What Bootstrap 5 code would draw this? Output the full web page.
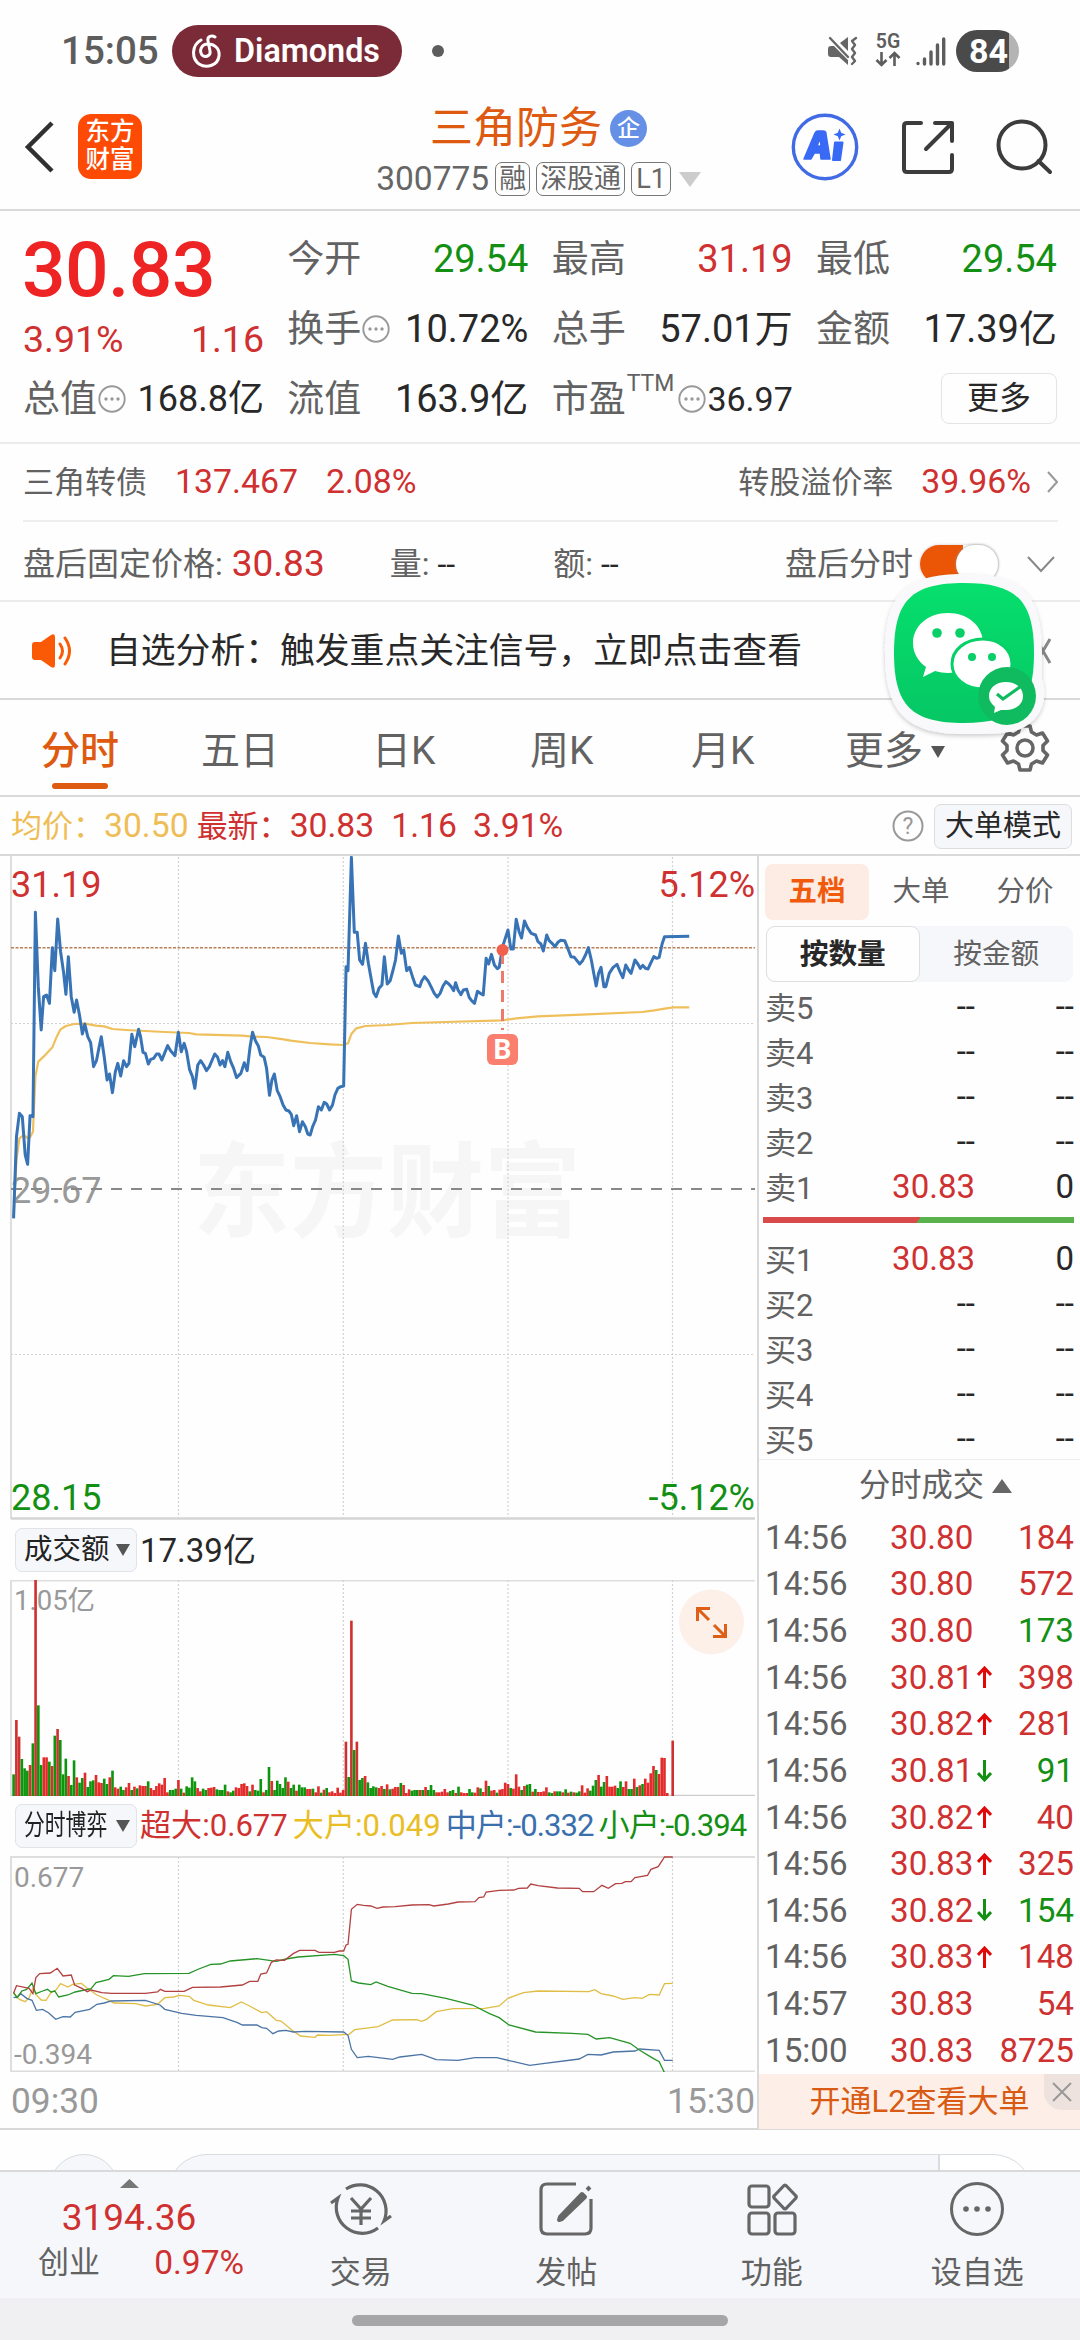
<!DOCTYPE html>
<html lang="zh-CN">
<head>
<meta charset="utf-8">
<meta name="viewport" content="width=device-width, initial-scale=1">
<title>三角防务 300775</title>
<link href="https://cdn.jsdelivr.net/npm/bootstrap@5.3.0/dist/css/bootstrap.min.css" rel="stylesheet">
<style>
:root{--up:#cf3030;--down:#139013;--brand:#dd5a10;--ink:#282828;--soft:#626262;--edge:#d9d9d9}
body{width:1080px;height:2340px;overflow:hidden;background:#fefefe;color:var(--ink);font-family:Roboto,"Noto Sans CJK SC",sans-serif;line-height:1;white-space:nowrap}
svg{display:block;flex:none}
.c-up{color:var(--up)}.c-down{color:var(--down)}.c-soft{color:var(--soft)}.c-brand{color:var(--brand)}
.c-gold{color:#efbd55}.c-large{color:#e9bd24}.c-mid{color:#3a6fae}
.status{height:100px;padding:2px 61px 0;color:#5d5d5d}
.clock{font-size:38.5px;font-weight:500;width:111px}
.song{width:230px;height:52px;border-radius:26px;background:#7b2b37;color:#fff;font-size:32.3px;font-weight:600;padding-left:20px}
.song svg{margin-right:12px}
.dot{width:12px;height:12px;border-radius:50%;background:#5d5d5d;margin-left:30px}
.s-net{margin-left:15px}.s-sig{margin-left:13px}
.batt{width:63px;height:42px;border-radius:21px;background:linear-gradient(90deg,#4a4a4a 53px,#b4b4b4 53px);color:#fff;font-size:34px;font-weight:700;padding-left:13px;margin-left:10px}
.head{height:111px;border-bottom:2px solid var(--edge);padding:0 27px 0 24px}
.logo{width:64px;height:65px;border-radius:13px;background:#fd4a04;color:#fff;font-size:24.5px;font-weight:500;line-height:28px;margin-left:22px;text-align:center;padding-top:4px}
.title{font-size:43px;color:var(--brand)}
.qi{width:37px;height:37px;border-radius:50%;background:#6590e6;color:#fff;font-size:23px;font-weight:500;margin-left:8px}
.code{font-size:33.5px;color:#666;margin-top:12px}
.tag-s{border:1.5px solid #777;border-radius:7px;font-size:27px;height:34px;padding:0 3px;margin-left:6px}
.head-l,.head-r{width:262px}
.head-c{padding-top:7px;width:326px}
.h-share{margin:0 39px 0 41px}
.quote{height:233px;border-bottom:2px solid #ececec;padding:13px 23px 0 23px}
.q-col{width:241px}
.q-row{height:70px;font-size:38px}
.q-row .c-soft{font-size:37px}
.q-row .q-36{font-size:36px}.q-row .q-34{font-size:34px}
.big{height:92px;font-size:76.8px;font-weight:500;color:#ee2424;letter-spacing:-.6px;margin-left:-1px}
.pct{height:48px;font-size:37.5px}
.more-b{width:116px;height:51px;border:1.5px solid #e4e4e4;border-radius:8px;font-size:32px;margin-top:-2px}
.q-row .ttm{font-size:23px;align-self:flex-start;margin:8px 3px 0 1px}
.bond{height:78px;border-bottom:2px solid #eee;margin:0 22px 0 23px;font-size:31px}
.bond b,.after b,.avg b{font-weight:400}
.bond b{font-size:33.8px;margin-left:28px}
.bond svg{margin-left:16px}
.after{height:80px;padding:5px 25px 0 23px;font-size:32px;border-bottom:2px solid #ececec}
.after b{font-size:37px;margin-left:9px}
.a-q{margin-left:65px}.a-e{margin-left:98px}
.after svg{margin-left:29px}
.toggle{width:78px;height:38px;border-radius:19px;background:linear-gradient(90deg,#ea5506 55%,#fff 55%);box-shadow:0 0 3px #ccc;position:relative;margin-left:7px}
.toggle::after{content:"";position:absolute;right:0;top:0;width:42px;height:38px;border-radius:19px;background:#fff;box-shadow:0 0 3px #999}
.notice{height:98px;padding:2px 28px 0 30px;font-size:34.8px;border-bottom:2px solid var(--edge)}
.notice span{margin-left:32px}
.tabs{height:97px;border-bottom:2px solid var(--edge);font-size:39px;color:var(--soft);padding:8px 0 0 41px}
.tabs>div{height:100%;position:relative}
.t1{width:160px}.t2{width:171px}.t3{width:158px}.t4{width:161px}.t5{width:154px}.t6{width:155px}
.t-on::after{content:"";position:absolute;left:11px;bottom:6px;width:56px;height:6px;border-radius:3px;background:var(--brand)}
.avg{height:59px;padding:1px 8px 0 11px;font-size:31px;border-bottom:2px solid var(--edge)}
.avg b{font-size:33.7px}
.a-1{margin-left:8px}.a-2{margin-left:17px}.a-3{margin-left:16px}
.mode{width:138px;height:45px;background:#f6f7fa;border:1.5px solid #ddd;border-radius:7px;font-size:29px;margin-left:10px}
.main{height:1272px}
.main-l{width:757px}.main-r{width:323px;border-left:2px solid var(--edge)}
.ind{height:60px;padding-left:15px}
.pick{width:122px;height:44px;background:#f6f7fa;border:1.5px solid #e2e3e6;border-radius:7px;font-size:28.5px;padding-left:8px;margin-right:3px;color:#222;position:relative}
.pick svg{position:absolute;left:100px}
.cond{transform:scaleX(.73);transform-origin:0 50%;display:inline-block}
.turn{font-size:33px}
.legend-t{font-size:31.1px}
.g-a{margin-left:5px}.g-n{letter-spacing:-.95px}
.axis{height:56px;font-size:35.3px;color:#999;padding:4px 2px 0 11px}
.r-tabs{height:70px;padding:8px 0 0 6px;font-size:28.5px}
.r-tabs div{width:104px;height:56px}
.r-tabs .on-pill{background:#fdece4;border-radius:8px;color:#f15a0d;font-weight:700}
.seg{width:307px;height:56px;background:#f6f7fa;border-radius:9px;margin:0 0 4px 7px;font-size:28.7px}
.seg div{width:50%;height:100%}
.seg .seg-on{background:#fefefe;border:1.5px solid #dedede;border-radius:9px;font-weight:700;color:#282828}
.lv{height:45px;font-size:31px}
.lv-a{width:60px;margin-left:6px}
.lv-b{width:150px;text-align:right;font-size:33px;padding-bottom:4px}
.lv-c{width:99px;text-align:right;font-size:33px;padding-bottom:4px}
.ratio{height:6px;width:311px;margin:6px 0 15px 4px;background:linear-gradient(125deg,#d94b4b 50%,#5ab24c 50%)}
.deals{height:55px;margin-top:-4px;border-top:1.5px solid #eee;font-size:31.3px;padding:0 0 2px 32px}
.tick{height:46.65px;font-size:33.2px}
.tk-t{width:125px;margin-left:6px}
.tk-p{width:101px}
.tk-v{width:83px;text-align:right}
.l2{height:55px;background:#fdefe8;color:#d95a12;font-size:31px;position:relative}
.l2-x{position:absolute;right:0;top:0;width:36px;height:36px;background:#ede2dd;border-bottom-left-radius:18px}
.peek{height:42px;border-top:2px solid var(--edge);overflow:hidden;padding:24px 0 0 49px;align-items:flex-start}
.pk-a{width:70px;height:70px;border-radius:35px;border:1.5px solid #d7dce0;background:#f6f7fa;flex:none}
.pk-b{width:866px;height:80px;border-radius:40px;border:1.5px solid #d7dce0;background:linear-gradient(90deg,#f6f7fa 770px,#d7dce0 770px,#d7dce0 772px,#fff 772px);margin-left:48px;flex:none}
.foot{height:128px;background:#f6f7fa;border-top:2px solid var(--edge);color:var(--soft);font-size:31px}
.f-i{width:205.5px;padding-top:9px}
.f-i svg{margin-bottom:20px}
.f-x{width:258px;padding-top:7px}
.f-n{font-size:37px;margin-top:11px}
.f-r{width:206px;margin:10px 0 0 24px}
.f-p{font-size:33.5px}
.home{height:42px;background:#f0f0f2}
.home div{width:376px;height:11px;border-radius:6px;background:#a6a6a9;margin-top:2px}
.chat{position:absolute;left:881px;top:572px}
</style>
</head>
<body>
<svg width="0" height="0" class="position-absolute"><defs>
<symbol id="info" viewBox="0 0 30 30"><circle cx="15" cy="15" r="12.700" fill="none" stroke="#999" stroke-width="1.900"/><circle cx="9" cy="15" r="1.700" fill="#999"/><circle cx="15" cy="15" r="1.700" fill="#999"/><circle cx="21" cy="15" r="1.700" fill="#999"/></symbol>
<symbol id="dn" viewBox="0 0 14 12"><path d="M0 0h14L7 12z" fill="#555"/></symbol>
</defs></svg>

<div class="status d-flex align-items-center">
  <div class="clock">15:05</div>
  <div class="song d-flex align-items-center">
    <svg width="30" height="34" viewBox="0 0 30 34" fill="none" stroke="#fff" stroke-width="3" stroke-linecap="round"><path d="M9 6C0 11-1 24 7 30c8 5 19 1 20-8 1-8-5-12-11-12-7 0-9 7-6 11 3 3 9 1 8-4L16 7c-1-5 4-6 7-4"/></svg>Diamonds
  </div>
  <div class="dot"></div>
  <svg class="ms-auto" width="32" height="32" viewBox="0 0 32 32"><path d="M13 8l8-6v14zM1 14q0-3 3-3h3l14 14v5l-9-8H4q-3 0-3-3z" fill="#666"/><path d="M3 3l18 19M29 3l-4 3 3 4-3 4 3 4-3 4 3 4-3 3" fill="none" stroke="#666" stroke-width="2.400" stroke-linecap="round" stroke-linejoin="round"/></svg>
  <svg class="s-net" width="28" height="38" viewBox="0 0 28 38"><text x="14" y="16" text-anchor="middle" font-size="19.500" font-weight="600" fill="#5d5d5d">5G</text><path d="M7.500 20v13M2.500 28l5 5 5-5M20.500 34V21M15.500 26l5-5 5 5" fill="none" stroke="#5d5d5d" stroke-width="2.600"/></svg>
  <svg class="s-sig" width="31" height="30" viewBox="0 0 31 30" stroke="#5d5d5d" stroke-width="3.400" stroke-linecap="round"><path d="M3 27.500v.1M9.500 23v5M16 16v12M22.500 9v19M28.700 3v25"/></svg>
  <div class="batt d-flex align-items-center">84</div>
</div>

<div class="head d-flex justify-content-between">
  <div class="head-l d-flex align-items-center pb-3">
    <svg width="32" height="54" viewBox="0 0 32 54"><path d="M28 3L4 27l24 24" fill="none" stroke="#303030" stroke-width="4.500"/></svg>
    <div class="logo">东方<br>财富</div>
  </div>
  <div class="head-c d-flex flex-column align-items-center">
    <div class="d-flex align-items-center title">三角防务<span class="qi d-flex align-items-center justify-content-center">企</span></div>
    <div class="code d-flex align-items-center"><span>300775</span><span class="tag-s d-flex align-items-center">融</span><span class="tag-s d-flex align-items-center">深股通</span><span class="tag-s d-flex align-items-center px-1">L1</span><svg class="ms-2" width="22" height="15"><path d="M0 0h22L11 15z" fill="#ccc"/></svg></div>
  </div>
  <div class="head-r d-flex align-items-center justify-content-end pb-3">
    <svg width="68" height="68" viewBox="0 0 68 68"><circle cx="34" cy="34" r="31.700" fill="none" stroke="#416be5" stroke-width="3.400"/><path fill-rule="evenodd" d="M13 46l11-26q1-2 3-2h5q3 0 3 3l4 25h-9l-.600-6h-6L20 46zM26 33h4l-.800-8z" fill="#386af5" stroke="#386af5" stroke-width="1.500" stroke-linejoin="round"/><path d="M44 29.500h7.500L49 47h-7z" fill="#386af5" stroke="#386af5" stroke-width="2" stroke-linejoin="round"/><path d="M48.500 15.500l1.700 4.300 4.300 1.700-4.300 1.700-1.700 4.300-1.700-4.300-4.300-1.700 4.300-1.700z" fill="#386af5"/></svg>
    <svg class="h-share" width="56" height="56" viewBox="0 0 56 56" fill="none" stroke="#3c3c3c" stroke-width="4" stroke-linecap="round" stroke-linejoin="round"><path d="M21 4H7Q4 4 4 7v43q0 3 3 3h42q3 0 3-3V36M35 4h17v18M50 6L26 30"/></svg>
    <svg width="58" height="58" viewBox="0 0 58 58" fill="none" stroke="#3c3c3c" stroke-width="4"><circle cx="27" cy="27" r="23.500"/><path d="M43.500 43L55 54" stroke-linecap="round"/></svg>
  </div>
</div>

<div class="quote d-flex justify-content-between">
  <div class="q-col">
    <div class="big d-flex align-items-center">30.83</div>
    <div class="pct d-flex align-items-center justify-content-between c-up"><span>3.91%</span><span>1.16</span></div>
    <div class="q-row d-flex align-items-center"><span class="c-soft">总值</span><svg width="30" height="30"><use href="#info"/></svg><span class="ms-auto q-36">168.8亿</span></div>
  </div>
  <div class="q-col">
    <div class="q-row d-flex align-items-center justify-content-between"><span class="c-soft">今开</span><span class="c-down">29.54</span></div>
    <div class="q-row d-flex align-items-center"><span class="c-soft">换手</span><svg width="30" height="30"><use href="#info"/></svg><span class="ms-auto">10.72%</span></div>
    <div class="q-row d-flex align-items-center justify-content-between"><span class="c-soft">流值</span><span>163.9亿</span></div>
  </div>
  <div class="q-col">
    <div class="q-row d-flex align-items-center justify-content-between"><span class="c-soft">最高</span><span class="c-up">31.19</span></div>
    <div class="q-row d-flex align-items-center justify-content-between"><span class="c-soft">总手</span><span>57.01万</span></div>
    <div class="q-row d-flex align-items-center"><span class="c-soft">市盈</span><span class="ttm c-soft">TTM</span><svg width="30" height="30"><use href="#info"/></svg><span class="ms-auto q-34">36.97</span></div>
  </div>
  <div class="q-col">
    <div class="q-row d-flex align-items-center justify-content-between"><span class="c-soft">最低</span><span class="c-down">29.54</span></div>
    <div class="q-row d-flex align-items-center justify-content-between"><span class="c-soft">金额</span><span>17.39亿</span></div>
    <div class="q-row d-flex align-items-center justify-content-end"><div class="more-b d-flex align-items-center justify-content-center">更多</div></div>
  </div>
</div>

<div class="bond d-flex align-items-center"><span class="c-soft">三角转债</span><b class="c-up">137.467</b><b class="c-up">2.08%</b><span class="c-soft ms-auto">转股溢价率</span><b class="c-up">39.96%</b><svg width="11" height="24"><path d="M1 2l9 10-9 10" fill="none" stroke="#999" stroke-width="2"/></svg></div>

<div class="after d-flex align-items-center"><span class="c-soft">盘后固定价格:</span><b class="c-up">30.83</b><span class="c-soft a-q">量:</span><span class="ms-2">--</span><span class="c-soft a-e">额:</span><span class="ms-2">--</span><span class="c-soft ms-auto">盘后分时</span><div class="toggle"></div><svg width="28" height="18"><path d="M1 2l13 14L27 2" fill="none" stroke="#888" stroke-width="2"/></svg></div>

<div class="notice d-flex align-items-center"><svg width="44" height="36" viewBox="0 0 44 36"><path d="M2 12q0-3 3-3h6L21 2q4-2 4 2v28q0 4-4 2l-10-7H5q-3 0-3-3z" fill="#fa5a05"/><path d="M30 11q5 7 0 14M35 5q9 13 0 26" fill="none" stroke="#fa5a05" stroke-width="3" stroke-linecap="round"/></svg><span>自选分析：触发重点关注信号，立即点击查看</span><svg class="ms-auto" width="18" height="28"><path d="M2 2l14 24M16 2L2 26" stroke="#888" stroke-width="3"/></svg></div>

<div class="tabs d-flex">
  <div class="t-on t1 c-brand d-flex align-items-center fw-medium">分时</div>
  <div class="t2 d-flex align-items-center">五日</div>
  <div class="t3 d-flex align-items-center">日K</div>
  <div class="t4 d-flex align-items-center">周K</div>
  <div class="t5 d-flex align-items-center">月K</div>
  <div class="t6 d-flex align-items-center">更多<svg class="ms-2" width="14" height="12"><use href="#dn"/></svg></div>
  <div class="d-flex align-items-center pb-2"><svg width="50" height="50" viewBox="0 0 50 50" fill="none" stroke="#666" stroke-width="3.600" stroke-linejoin="round"><path d="M20 3h10l1.500 6 5 3 6-2 5 8-4.500 4.500v5L47.500 32l-5 8-6-2-5 3L30 47H20l-1.500-6-5-3-6 2-5-8L7 27.500v-5L2.500 18l5-8 6 2 5-3z"/><circle cx="25" cy="25" r="8"/></svg></div>
</div>

<div class="avg d-flex align-items-center"><span class="c-gold">均价：<b>30.50</b></span><span class="c-up a-1">最新：<b>30.83</b></span><b class="c-up a-2">1.16</b><b class="c-up a-3">3.91%</b>
<svg class="ms-auto" width="32" height="32" viewBox="0 0 32 32"><circle cx="16" cy="16" r="14.500" fill="none" stroke="#999" stroke-width="2"/><text x="16" y="24" text-anchor="middle" font-size="23" fill="#999">?</text></svg><div class="mode d-flex align-items-center justify-content-center">大单模式</div></div>

<div class="main d-flex">
<div class="main-l">
  <svg id="price" width="757" height="664" viewBox="0 856 757 664">
    <g fill="#f6f6f6" font-size="97" font-weight="700" transform="translate(0 1141) scale(1 1.070)"><text x="193" y="82">东方财富</text></g>
    <path d="M11 856v663" stroke="#dedede" stroke-width="2"/>
    <path d="M178.500 857v662M343.300 857v662M508 857v662M672.500 857v662M11 1023.500h744M11 1354.500h744" stroke="#d2d2d2" stroke-width="1.200" stroke-dasharray="2 2"/>
    <path d="M11 1518.500h744" stroke="#d4d4d4" stroke-width="2.500"/>
    <path d="M11 947.700h744" stroke="#b98057" stroke-width="1.500" stroke-dasharray="3 1.500"/>
    <text x="11" y="1203" font-size="36" fill="#999">29.67</text>
    <path d="M11 1189h744" stroke="#888" stroke-width="2" stroke-dasharray="11 9"/>
    <g transform="translate(0 850) scale(.48469 .33333)" fill="none" stroke-linejoin="round">
      <polyline vector-effect="non-scaling-stroke" stroke="#efbf5b" stroke-width="2.200" points="28,1100 34,930 40,865 46,858 52,858 57,865 62,862 68,845 73,680 79,635 90,620 108,592 117,560 125,538 136,528 153,522 175,521 198,527 215,529 232,537 260,540 300,543 340,546 390,549 405,553 500,557 521,560 550,561 585,568 600,572 640,579 680,583 709,585 718,580 725,552 735,535 754,528 800,525 850,519 920,516 1037,511 1065,505 1110,499 1200,494 1325,486 1350,481 1371,476 1390,472 1422,472"/>
      <polyline vector-effect="non-scaling-stroke" stroke="#3873b5" stroke-width="3" points="28,1105 34,860 40,790 46,800 52,915 57,943 62,797 68,800 73,187 79,410 85,540 90,440 96,435 102,460 108,293 113,362 119,207 125,305 131,365 136,433 141,320 147,440 153,487 158,450 164,495 170,552 175,522 181,560 187,578 193,650 199,632 204,595 209,560 215,620 221,690 226,672 232,728 238,665 243,640 249,678 255,632 261,650 266,640 272,553 278,590 286,538 290,560 295,607 300,610 306,642 311,628 317,625 323,612 328,612 334,630 340,608 346,587 352,602 361,617 368,547 374,605 380,580 385,605 391,658 397,680 402,715 408,645 414,632 420,645 426,662 432,650 443,612 449,622 454,645 459,632 464,650 470,607 476,635 482,655 488,683 497,670 504,638 510,662 516,590 521,547 527,572 533,588 538,615 545,622 550,655 556,736 561,690 566,672 572,722 578,740 584,765 590,780 596,783 601,793 606,827 612,797 618,845 624,815 630,830 635,852 640,855 645,830 651,810 657,770 663,780 669,757 674,762 680,780 686,765 691,735 697,715 703,710 709,708 714,350 718,362 725,22 731,247 737,247 742,330 748,343 754,280 760,340 765,380 771,428 776,440 782,415 788,405 793,320 799,402 805,392 811,360 816,330 822,258 828,310 833,300 839,362 845,352 851,380 857,405 866,410 870,393 876,380 883,392 890,412 896,430 902,441 908,430 914,408 920,395 926,402 931,410 936,422 940,398 945,420 951,434 956,420 963,418 968,442 973,452 979,460 985,424 991,430 997,435 1003,325 1008,342 1014,313 1020,345 1026,356 1030,352 1037,290 1048,240 1054,297 1059,297 1065,208 1071,245 1076,264 1082,213 1088,232 1096,250 1105,255 1110,275 1116,282 1121,303 1128,255 1133,272 1139,280 1145,290 1151,277 1157,271 1165,272 1170,290 1178,320 1185,322 1196,342 1202,332 1208,315 1214,293 1220,330 1225,370 1230,408 1235,370 1240,352 1246,410 1250,410 1257,370 1265,352 1273,343 1279,365 1285,383 1291,345 1297,360 1302,370 1310,330 1316,342 1321,355 1326,346 1332,355 1337,357 1343,338 1349,320 1355,325 1360,322 1366,282 1371,260 1422,259"/>
    </g>
    <path d="M502.500 952v78" stroke="#ee7a6c" stroke-width="3" stroke-dasharray="12 7"/>
    <circle cx="502.500" cy="950" r="6" fill="#f0604c"/>
    <rect x="487" y="1034" width="31" height="31" rx="6" fill="#fa7f6e"/><text x="502.500" y="1059" font-size="28" font-weight="700" fill="#fff" text-anchor="middle">B</text>
    <g font-size="36"><text x="11" y="897" fill="#cf3030">31.19</text><text x="755" y="897" fill="#cf3030" text-anchor="end">5.12%</text><text x="11" y="1510" fill="#139013">28.15</text><text x="755" y="1510" fill="#139013" text-anchor="end">-5.12%</text></g>
  </svg>
  <div class="ind d-flex align-items-center"><div class="pick d-flex align-items-center">成交额<svg width="14" height="12"><use href="#dn"/></svg></div><span class="turn">17.39亿</span></div>
  <svg width="757" height="216" viewBox="0 1580 757 216">
    <path d="M11 1796v-215.500h744" fill="none" stroke="#dedede" stroke-width="2"/>
    <path d="M178.500 1580v216M343.300 1580v216M508 1580v216M672.500 1580v216" stroke="#d2d2d2" stroke-width="1.200" stroke-dasharray="2 2"/>
    <path d="M11 1795.500h744" stroke="#ccc" stroke-width="1.500"/>
    <text x="14" y="1610" font-size="27.500" fill="#999">1.05亿</text>
    <g id="vol" transform="translate(0 1560) scale(.48469 .33333)"></g>
    <circle cx="711.500" cy="1622" r="32.500" fill="#fdf0e9"/>
    <path d="M697.500 1621v-12.500h12.500M698 1609l11 11M725.500 1624v12.500H713M725 1636l-11-11" fill="none" stroke="#dd5f18" stroke-width="3"/>
  </svg>
  <div class="ind d-flex align-items-center legend-t"><div class="pick d-flex align-items-center"><span class="cond">分时博弈</span><svg width="14" height="12"><use href="#dn"/></svg></div><span class="c-up">超大:0.677</span><span class="c-large g-a">大户:0.049</span><span class="c-mid g-a g-n">中户:-0.332</span><span class="c-down g-a g-n">小户:-0.394</span></div>
  <svg width="757" height="216" viewBox="0 1855 757 216">
    <path d="M11 2072v-216h744" fill="none" stroke="#dedede" stroke-width="2"/>
    <path d="M178.500 1856v216M343.300 1856v216M508 1856v216M672.500 1856v216" stroke="#d2d2d2" stroke-width="1.200" stroke-dasharray="2 2"/>
    <path d="M11 2070.500h744" stroke="#dcdcdc" stroke-width="2"/>
    <g font-size="28" fill="#999"><text x="14" y="1885.500">0.677</text><text x="14" y="2063">-0.394</text></g>
    <g transform="translate(0 1800) scale(.48469 .33333)" fill="none" stroke-width="1.300">
      <polyline vector-effect="non-scaling-stroke" stroke="#e0bd45" points="28,575 40,595 52,602 60,590 68,560 74,580 85,597 95,598 105,575 115,568 125,548 140,558 150,550 168,547 180,562 200,582 225,598 235,606 280,608 300,615 325,610 340,590 358,588 370,583 390,586 400,598 430,612 475,620 498,603 515,615 540,635 550,632 570,658 580,660 600,685 620,705 650,709 655,702 680,703 720,700 732,686 780,677 810,657 860,656 870,661 880,655 900,632 935,623 1000,622 1030,615 1048,592 1080,575 1110,570 1215,572 1227,566 1240,578 1265,585 1285,595 1310,590 1325,592 1340,580 1360,582 1371,548 1388,547"/>
      <polyline vector-effect="non-scaling-stroke" stroke="#4b74a5" points="28,590 36,588 43,578 55,592 66,598 75,628 88,625 100,635 115,655 130,647 145,648 155,634 185,625 200,610 215,606 230,600 300,598 330,612 340,625 375,637 405,643 460,650 490,665 500,672 530,672 540,680 550,682 563,698 575,690 590,688 605,693 630,691 709,693 718,703 725,745 737,770 760,766 810,775 825,768 870,760 900,776 945,778 980,770 1025,770 1060,782 1093,793 1120,788 1195,774 1213,760 1240,762 1265,753 1310,750 1320,744 1360,748 1371,778 1388,778"/>
      <polyline vector-effect="non-scaling-stroke" stroke="#259326" points="28,575 35,590 45,570 55,565 66,546 74,578 88,570 98,565 105,573 113,570 121,588 140,582 155,573 188,563 198,545 225,535 234,524 265,526 298,518 390,517 410,504 435,490 455,489 475,480 530,473 570,481 590,474 615,468 690,460 709,464 718,475 725,540 740,546 765,551 776,543 800,556 850,577 870,578 920,592 975,612 1010,638 1030,650 1050,672 1105,693 1180,697 1213,700 1230,714 1258,710 1300,727 1320,748 1345,770 1360,782 1371,815 1388,816"/>
      <polyline vector-effect="non-scaling-stroke" stroke="#b44141" points="28,577 34,554 53,560 60,562 68,578 74,530 82,518 104,516 118,502 130,525 147,522 154,552 170,563 180,572 188,567 210,575 230,577 300,577 325,573 331,565 340,571 380,571 397,559 455,558 500,552 515,541 532,541 538,519 550,516 560,484 570,477 587,478 605,458 618,448 650,448 658,454 690,454 700,450 709,450 714,432 718,430 725,325 737,310 750,313 765,315 778,322 790,318 815,317 850,312 885,311 895,315 925,309 945,303 980,302 988,290 998,288 1003,273 1030,268 1060,267 1070,262 1088,261 1095,249 1110,254 1150,261 1195,262 1202,272 1225,272 1242,253 1255,262 1270,248 1283,247 1290,242 1302,242 1310,230 1336,223 1343,205 1358,197 1371,168 1388,168"/>
    </g>
  </svg>
  <div class="axis d-flex justify-content-between align-items-center"><span>09:30</span><span>15:30</span></div>
</div>
<div class="main-r">
  <div class="r-tabs d-flex c-soft"><div class="on-pill d-flex align-items-center justify-content-center">五档</div><div class="d-flex align-items-center justify-content-center">大单</div><div class="d-flex align-items-center justify-content-center">分价</div></div>
  <div class="seg d-flex c-soft"><div class="seg-on d-flex align-items-center justify-content-center">按数量</div><div class="d-flex align-items-center justify-content-center">按金额</div></div>
  <div id="asks"></div>
  <div class="ratio"></div>
  <div id="bids"></div>
  <div class="deals c-soft d-flex align-items-center justify-content-center">分时成交<svg class="ms-2" width="20" height="14"><path d="M0 14h20L10 0z" fill="#666"/></svg></div>
  <div id="ticks"></div>
  <div class="l2 d-flex align-items-center justify-content-center">开通L2查看大单<div class="l2-x d-flex align-items-center justify-content-center"><svg width="20" height="20"><path d="M1 1l18 18M19 1L1 19" stroke="#999" stroke-width="2"/></svg></div></div>
</div>
</div>

<div class="peek d-flex"><div class="pk-a"></div><div class="pk-b"></div></div>

<div class="foot d-flex">
  <div class="f-x d-flex flex-column align-items-center"><svg width="19" height="9"><path d="M0 9h19L9.500 0z" fill="#777"/></svg><span class="c-up f-n">3194.36</span><div class="f-r d-flex justify-content-between align-items-center"><span>创业</span><span class="c-up f-p">0.97%</span></div></div>
  <div class="f-i d-flex flex-column align-items-center"><svg width="64" height="56" viewBox="0 0 64 56" fill="none" stroke="#666" stroke-width="3.200"><path d="M17 8A26 26 0 0 1 55 40l7-5M49 47A26 26 0 0 1 9 17l-7 5M22 17l10 11 10-11M32 28v16M22 30h20M22 37h20"/></svg>交易</div>
  <div class="f-i d-flex flex-column align-items-center"><svg width="56" height="56" viewBox="0 0 56 56" fill="none" stroke="#666" stroke-width="3.200"><path d="M38 3H9Q3 3 3 9v38q0 6 6 6h38q6 0 6-6V18"/><path d="M44 13L22 36l-1 3 3-1 23-22zM49 9l3-3" fill="#666" stroke-width="4" stroke-linejoin="round"/></svg>发帖</div>
  <div class="f-i d-flex flex-column align-items-center"><svg width="52" height="56" viewBox="0 0 52 56" fill="none" stroke="#666" stroke-width="3.200"><rect x="3" y="5" width="20" height="21" rx="3"/><rect x="3" y="32" width="20" height="21" rx="3"/><rect x="29" y="32" width="20" height="21" rx="3"/><path d="M37.500 5q1.500-2 3 0l9 9.500q1.500 1.500 0 3l-9 9.500q-1.500 2-3 0l-9-9.500q-1.500-1.500 0-3z"/></svg>功能</div>
  <div class="f-i d-flex flex-column align-items-center"><svg width="56" height="56" viewBox="0 0 56 56"><circle cx="28" cy="28" r="25.500" fill="none" stroke="#666" stroke-width="3"/><g fill="#666"><circle cx="17" cy="28" r="2.800"/><circle cx="28" cy="28" r="2.800"/><circle cx="39" cy="28" r="2.800"/></g></svg>设自选</div>
</div>
<div class="home d-flex justify-content-center align-items-center"><div></div></div>

<svg class="chat" width="166" height="168" viewBox="882 572 166 168">
  <defs><linearGradient id="wg" x1="0" y1="0" x2="0" y2="1"><stop offset="0" stop-color="#06df6d"/><stop offset="1" stop-color="#06c764"/></linearGradient><filter id="sh" x="-10%" y="-10%" width="120%" height="120%"><feDropShadow dx="0" dy="2" stdDeviation="2" flood-opacity=".2"/></filter></defs>
  <path filter="url(#sh)" d="M965 574c58 0 78 20 78 79v26c4 12 3 26-5 37-8 10-18 15-28 16-14 2-25 2-45 2-58 0-79-22-79-81s21-79 79-79z" fill="#f9f9fb"/>
  <path d="M965 583c52 0 70 17 70 70s-18 70-70 70-70-17-70-70 18-70 70-70z" fill="url(#wg)"/>
  <path d="M949 613c-20 0-35 13-35 30 0 10 5 18 13 24l-3 10 12-6c4 1 9 2 13 2 20 0 35-13 35-30s-15-30-35-30z" fill="#fff"/>
  <path d="M984 639c-18 0-31 11-31 25s13 25 31 25c5 0 9-1 12-2l9 5-2-8c6-5 10-11 10-20 0-14-12-25-29-25z" fill="#fff" stroke="#06d168" stroke-width="3"/>
  <g fill="#08cf68"><circle cx="938" cy="633" r="4.800"/><circle cx="961" cy="633" r="4.800"/><circle cx="973" cy="657" r="4"/><circle cx="993" cy="657" r="4"/></g>
  <circle cx="1008" cy="696" r="29" fill="#10bb60"/>
  <path d="M1007 682c-10 0-17 6-17 14 0 5 3 8 6 11l-1 6 7-3h5c10 0 17-6 17-14s-7-14-17-14z" fill="#fff"/><path d="M998 694l6 5 17-12" fill="none" stroke="#10bb60" stroke-width="3.200"/>
</svg>

<script>
// Depth levels: label, price, size
function levels(id, rows){
  document.getElementById(id).innerHTML = rows.map(function(r){
    return '<div class="lv d-flex align-items-center"><span class="lv-a c-soft">'+r[0]+'</span><span class="lv-b '+(r[1]==='--'?'':'c-up')+'">'+r[1]+'</span><span class="lv-c">'+r[2]+'</span></div>';
  }).join('');
}
levels('asks',[['卖5','--','--'],['卖4','--','--'],['卖3','--','--'],['卖2','--','--'],['卖1','30.83','0']]);
levels('bids',[['买1','30.83','0'],['买2','--','--'],['买3','--','--'],['买4','--','--'],['买5','--','--']]);
// Trades: time, price, direction, volume, volume side
var arrow = {u:'<svg width="15" height="22"><path d="M7.500 22V2M1 9l6.500-7L14 9" fill="none" stroke="#e00808" stroke-width="3"/></svg>',
             d:'<svg width="15" height="22"><path d="M7.500 0v20M1 13l6.500 7 6.500-7" fill="none" stroke="#139013" stroke-width="3"/></svg>','':''};
document.getElementById('ticks').innerHTML = [
 ['14:56','30.80','',184,'up'],['14:56','30.80','',572,'up'],['14:56','30.80','',173,'down'],['14:56','30.81','u',398,'up'],
 ['14:56','30.82','u',281,'up'],['14:56','30.81','d',91,'down'],['14:56','30.82','u',40,'up'],['14:56','30.83','u',325,'up'],
 ['14:56','30.82','d',154,'down'],['14:56','30.83','u',148,'up'],['14:57','30.83','',54,'up'],['15:00','30.83','',8725,'up']
].map(function(t){
  return '<div class="tick d-flex align-items-center"><span class="tk-t c-soft">'+t[0]+'</span><span class="tk-p c-up d-flex align-items-center">'+t[1]+'&#8202;'+arrow[t[2]]+'</span><span class="tk-v c-'+t[4]+'">'+t[3]+'</span></div>';
}).join('');
// Turnover per minute; negative values are drawn green
var v=[-65,228,178,-111,-83,-76,93,-158,648,-272,-93,116,116,-103,90,-181,201,-168,-65,-112,60,-33,-107,56,-40,-54,70,-27,-44,-47,63,41,39,-52,-36,56,-76,26,22,-28,-18,26,39,-18,28,-23,32,30,30,-44,24,18,30,38,34,54,11,-18,-18,-22,48,-22,10,-29,-25,-56,-44,24,14,-22,-18,24,25,27,-20,-18,-18,-34,14,-11,-16,26,24,36,38,30,-14,34,-18,-16,-51,11,-18,-87,45,-18,-46,-36,-24,-56,43,-24,-34,16,-34,-26,-26,21,21,-22,11,29,-10,19,-24,11,14,9,25,10,18,163,-57,526,-138,163,-48,-54,60,-41,-24,-29,-26,24,30,-21,35,-20,22,27,27,-39,33,9,20,-16,-18,-18,18,-18,27,-18,-33,-18,11,11,13,21,11,-15,-18,9,-28,11,9,9,-21,-11,10,26,-23,12,46,-30,16,18,-10,19,21,40,36,-24,22,65,28,-18,30,-34,-36,13,-21,12,12,14,26,-11,-9,14,-14,-14,11,-20,10,-13,11,-10,-14,32,10,23,-16,-31,-48,63,-28,-42,60,28,28,31,-24,-44,27,44,-21,-21,52,-27,32,-36,52,40,68,90,-78,66,115,114,9,0,166];
document.getElementById('vol').innerHTML = v.map(function(h,i){
  return '<rect x="'+(25.400+i*5.666).toFixed(1)+'" y="'+(708-Math.abs(h))+'" width="5.400" height="'+Math.abs(h)+'" fill="'+(h<0?'#0d960d':(h>150?'#cf3030':'#e22b2b'))+'"/>';
}).join('');
</script>
<script src="https://cdn.jsdelivr.net/npm/bootstrap@5.3.0/dist/js/bootstrap.bundle.min.js"></script>
</body>
</html>
